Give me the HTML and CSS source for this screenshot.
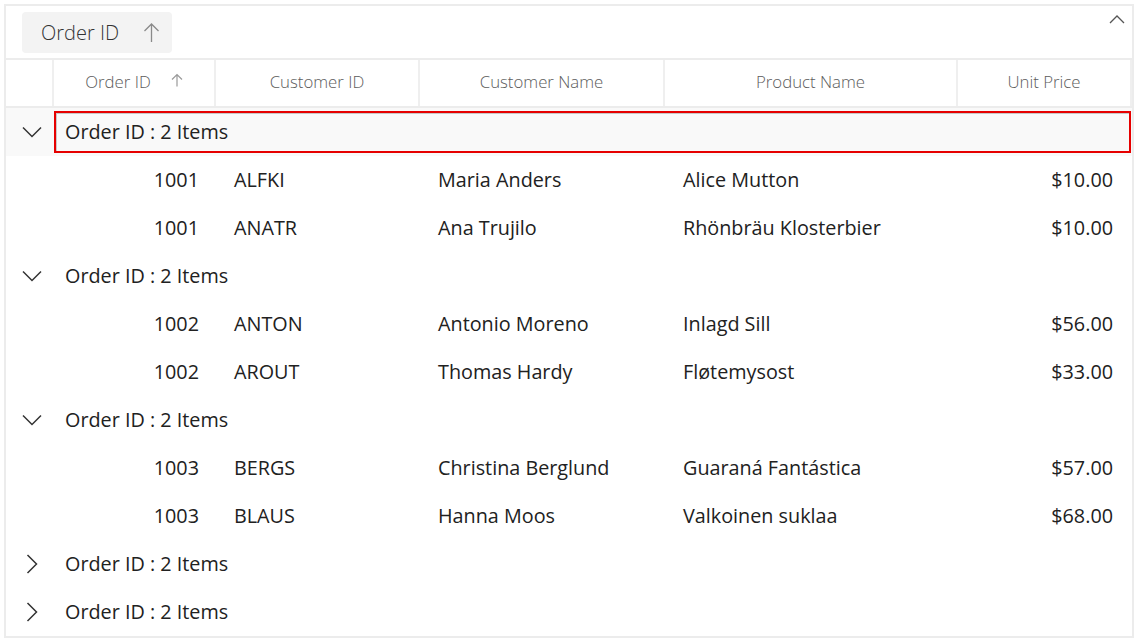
FILE: index.html
```html
<!DOCTYPE html>
<html>
<head>
<meta charset="utf-8">
<link rel="stylesheet" href="styles.css">
</head>
<body>
<div class="grid">
  <div class="drop">
    <div class="chip">
      <span class="chip-text">Order ID</span>
      <svg class="chip-arrow" width="17" height="21" viewBox="0 0 17 21"><path d="M8.5 20V2M1.5 9L8.5 2l7 7" fill="none" stroke="#8a8a8a" stroke-width="1.3"/></svg>
    </div>
    <svg class="collapse" width="16" height="9" viewBox="0 0 16 9"><path d="M1 8l7-7 7 7" fill="none" stroke="#555" stroke-width="1.3"/></svg>
  </div>
  <div class="row head">
    <div class="hc indent"></div>
    <div class="hc"><span>Order ID</span><svg class="h-arrow" width="12" height="14" viewBox="0 0 12 14"><path d="M6 13.5V1.5M1 6.5l5-5 5 5" fill="none" stroke="#9a9a9a" stroke-width="1.2"/></svg></div>
    <div class="hc">Customer ID</div>
    <div class="hc">Customer Name</div>
    <div class="hc">Product Name</div>
    <div class="hc last">Unit Price</div>
  </div>

  <div class="row group current">
    <div class="exp"><svg width="20" height="12" viewBox="0 0 20 12"><path d="M1 1.5l9 9 9-9" fill="none" stroke="#333" stroke-width="1.5"/></svg></div>
    <div class="caption focused">Order ID : 2 Items</div>
  </div>
  <div class="row data">
    <div></div><div class="num">1001</div><div class="txt">ALFKI</div><div class="txt">Maria Anders</div><div class="txt">Alice Mutton</div><div class="num price">$10.00</div>
  </div>
  <div class="row data">
    <div></div><div class="num">1001</div><div class="txt">ANATR</div><div class="txt">Ana Trujilo</div><div class="txt">Rhönbräu Klosterbier</div><div class="num price">$10.00</div>
  </div>

  <div class="row group">
    <div class="exp"><svg width="20" height="12" viewBox="0 0 20 12"><path d="M1 1.5l9 9 9-9" fill="none" stroke="#333" stroke-width="1.5"/></svg></div>
    <div class="caption">Order ID : 2 Items</div>
  </div>
  <div class="row data">
    <div></div><div class="num">1002</div><div class="txt">ANTON</div><div class="txt">Antonio Moreno</div><div class="txt">Inlagd Sill</div><div class="num price">$56.00</div>
  </div>
  <div class="row data">
    <div></div><div class="num">1002</div><div class="txt">AROUT</div><div class="txt">Thomas Hardy</div><div class="txt">Fløtemysost</div><div class="num price">$33.00</div>
  </div>

  <div class="row group">
    <div class="exp"><svg width="20" height="12" viewBox="0 0 20 12"><path d="M1 1.5l9 9 9-9" fill="none" stroke="#333" stroke-width="1.5"/></svg></div>
    <div class="caption">Order ID : 2 Items</div>
  </div>
  <div class="row data">
    <div></div><div class="num">1003</div><div class="txt">BERGS</div><div class="txt">Christina Berglund</div><div class="txt">Guaraná Fantástica</div><div class="num price">$57.00</div>
  </div>
  <div class="row data">
    <div></div><div class="num">1003</div><div class="txt">BLAUS</div><div class="txt">Hanna Moos</div><div class="txt">Valkoinen suklaa</div><div class="num price">$68.00</div>
  </div>

  <div class="row group">
    <div class="exp"><svg width="12" height="20" viewBox="0 0 12 20"><path d="M1.5 1l9 9-9 9" fill="none" stroke="#333" stroke-width="1.5"/></svg></div>
    <div class="caption">Order ID : 2 Items</div>
  </div>
  <div class="row group">
    <div class="exp"><svg width="12" height="20" viewBox="0 0 12 20"><path d="M1.5 1l9 9-9 9" fill="none" stroke="#333" stroke-width="1.5"/></svg></div>
    <div class="caption">Order ID : 2 Items</div>
  </div>
</div>
</body>
</html>
```

FILE: styles.css
```css
html, body {
  margin: 0;
  padding: 0;
  background: #fff;
}
body {
  font-family: "Open Sans", "Noto Sans", sans-serif;
  color: #212121;
}
.grid {
  margin: 4px;
  width: 1126px;
  height: 630px;
  border: 2px solid #ececec;
  overflow: hidden;
}
.drop {
  height: 52px;
  border-bottom: 2px solid #ececec;
  display: flex;
  align-items: flex-start;
  justify-content: space-between;
  padding: 0 7px 0 16px;
}
.chip {
  margin-top: 6px;
  height: 41px;
  width: 150px;
  box-sizing: border-box;
  background: #f3f3f3;
  border-radius: 4px;
  display: flex;
  align-items: center;
  padding-left: 19px;
}
.chip-text {
  font-size: 20px;
  font-weight: 300;
  color: #333;
  margin-top: -1px;
}
.chip-arrow {
  margin-left: 24px;
}
.collapse {
  margin-top: 9px;
}
.row {
  display: grid;
  grid-template-columns: 48px 162px 204px 245px 293px 1fr;
  height: 48px;
  align-items: center;
}
.row.head {
  height: 46px;
  border-bottom: 2px solid #ececec;
  align-items: stretch;
}
.hc {
  display: flex;
  align-items: center;
  justify-content: center;
  font-size: 16.8px;
  font-weight: 300;
  color: #5c5c5c;
  border-right: 2px solid #efefef;
  padding-bottom: 3px;
}
.h-arrow {
  margin-left: 20px;
  margin-top: -3px;
}
.row.group {
  grid-template-columns: 48px 1fr;
}
.row.group.current {
  background: #f9f9f9;
}
.exp {
  display: flex;
  align-items: center;
  justify-content: center;
  padding-left: 4px;
}
.caption {
  font-size: 19.8px;
  padding-left: 11px;
  height: 42px;
  display: flex;
  align-items: center;
  box-sizing: border-box;
  margin-right: 1px;
  margin-top: -2px;
}
.caption.focused {
  border: 2px solid #e60000;
  box-shadow: inset 1px 1px 0 #c8c8c8;
  padding-left: 9px;
  padding-bottom: 2px;
  margin-top: 0;
}
.data {
  font-size: 19.8px;
}
.data > div {
  margin-top: -2px;
}
.num {
  text-align: right;
  padding-right: 17px;
}
.price {
  padding-right: 19px;
}
.txt {
  padding-left: 18px;
}
```
